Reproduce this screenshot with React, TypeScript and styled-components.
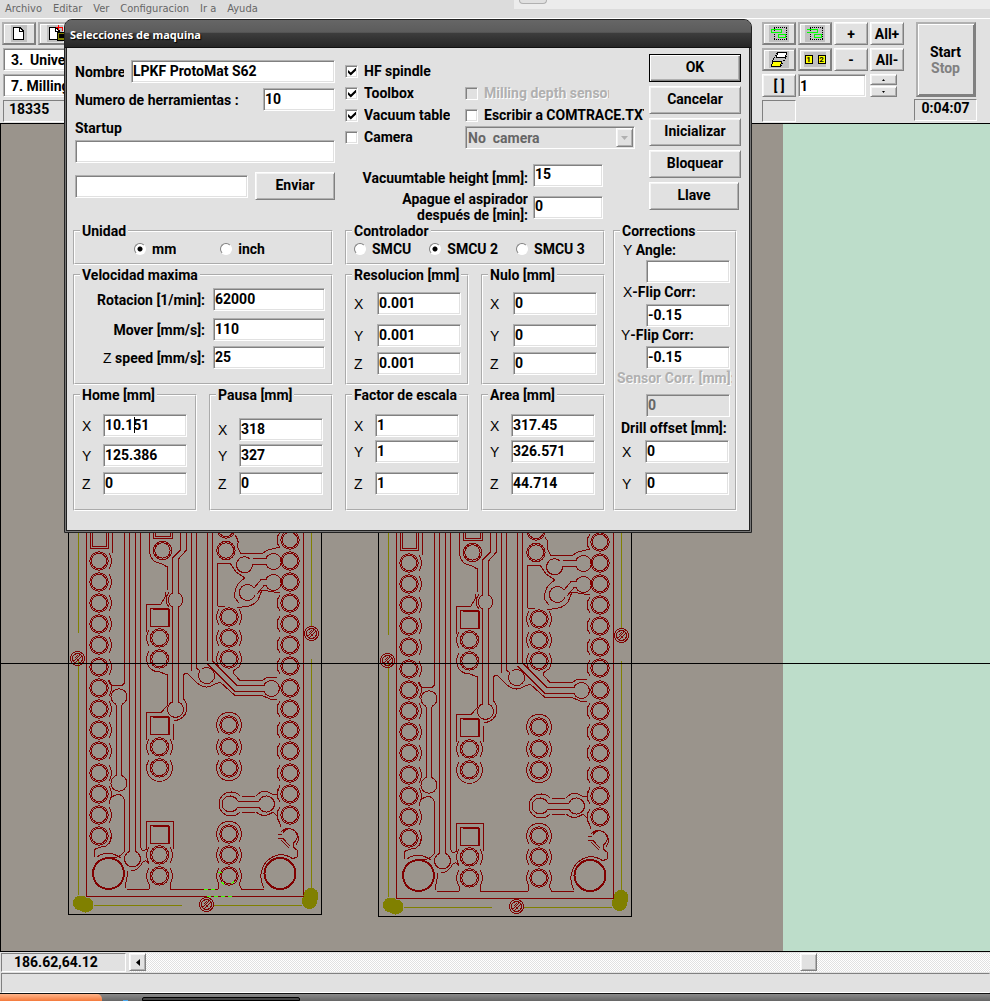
import React, { useId } from "react";
import styled, { createGlobalStyle, css } from "styled-components";

const face = "#e1e1e1";
const mid = "#b0b0b0";
const dark = "#808080";
const uiFont = `Roboto, "Liberation Sans", sans-serif`;

const GlobalStyle = createGlobalStyle`
  * { box-sizing: border-box; }
  body {
    margin: 0;
    background: ${face};
    color: #000;
    font: 700 14px/16px ${uiFont};
    overflow: hidden;
  }
  button, input, select { font: inherit; color: inherit; margin: 0; border-radius: 0; }
`;

const sunken = css`
  border: 1px solid;
  border-color: ${mid} #fff #fff ${mid};
  box-shadow: inset 1px 1px 0 ${dark}, inset -1px -1px 0 ${face};
`;

const raised = css`
  border: 1px solid;
  border-color: #fff ${dark} ${dark} #fff;
  box-shadow: inset 1px 1px 0 #f4f4f4, inset -1px -1px 0 ${mid};
`;

/* ---------- page frame ---------- */

const Page = styled.div`
  position: relative;
  min-height: 100vh;
  display: flex;
  flex-direction: column;
`;

const TopStrip = styled.header`
  display: flex;
  height: 19px;
  background: #dcdcdc;
  border-bottom: 1px solid #fff;
`;

const Menu = styled.nav`
  display: flex;
  flex: 0 0 514px;
  gap: 11px;
  padding-left: 5px;
  font: 400 11px/17px "DejaVu Sans Condensed", "DejaVu Sans", sans-serif;
`;

const MenuLink = styled.a`
  color: #666;
  text-decoration: none;
`;

const TabStrip = styled.div`
  flex: 1;
  height: 9px;
  padding-left: 5px;
  background: #ececec;
`;

const TabStub = styled.div`
  width: 28px;
  height: 4px;
  background: #e0e0e0;
  border: 1px solid ${mid};
  border-top: 0;
  border-radius: 0 0 4px 4px;
`;

const Toolbar = styled.div`
  display: flex;
  justify-content: space-between;
  height: 104px;
  padding: 3px 13px 0 2px;
`;

const ToolColumn = styled.div`
  display: flex;
  flex-direction: column;
  gap: 3px;
`;

const ButtonRow = styled.div`
  display: flex;
  gap: 2px;
`;

const toolFrame = css`
  border: 2px solid;
  border-color: ${mid} ${dark} ${dark} ${mid};
  box-shadow: inset 1px 1px 0 #fff;
`;

const ToolButton = styled.button<{ $icon?: boolean }>`
  display: flex;
  align-items: center;
  justify-content: center;
  width: 34px;
  height: 23px;
  padding: 0;
  background: ${face};
  white-space: pre;
  ${(p) => (p.$icon ? toolFrame : raised)}
`;

const PickList = styled.select`
  appearance: none;
  width: 160px;
  height: 23px;
  margin: 0 0 0 1px;
  padding: 0 7px;
  background: #fff;
  outline: 0;
  white-space: pre;
  ${sunken}
`;

const Readout = styled.output<{ $wide?: boolean }>`
  display: block;
  height: 22px;
  line-height: 17px;
  padding: 0 ${(p) => (p.$wide ? 6 : 5)}px;
  margin-left: ${(p) => (p.$wide ? 0 : 1)}px;
  border: 1px solid;
  border-color: ${dark} #fff #fff ${dark};
`;

const ToolRight = styled.div`
  display: flex;
  gap: 10px;
`;

const ToolGrid = styled.div`
  display: grid;
  grid-template-columns: repeat(4, 34px);
  grid-template-rows: 23px 23px 23px 22px;
  gap: 3px 2px;
`;

const StepField = styled.input`
  grid-column: span 2;
  width: 68px;
  height: 23px;
  padding: 0 1px;
  background: #fff;
  ${sunken}
`;

const Spinner = styled.div`
  display: flex;
  flex-direction: column;
  gap: 1px;
`;

const SpinButton = styled.button`
  display: flex;
  align-items: center;
  justify-content: center;
  width: 27px;
  height: 11px;
  padding: 0;
  background: ${face};
  ${raised}
`;

const StartColumn = styled.div`
  display: flex;
  flex-direction: column;
  align-items: center;
  gap: 2px;
  width: 63px;
`;

const StartButton = styled.button`
  width: 60px;
  height: 75px;
  padding: 0;
  background: ${face};
  border: 2px solid;
  border-color: ${mid} ${dark} ${dark} ${mid};
  box-shadow: inset 1px 1px 0 #fff, inset -1px -1px 0 ${dark};
`;

const Muted = styled.span`
  display: block;
  color: ${dark};
`;

const Workspace = styled.main`
  flex: 1;
  display: flex;
  min-height: 600px;
  border: solid #000;
  border-width: 1px 0 1px 1px;
  background: #bdddca;
`;

const Drawing = styled.svg`
  flex: 1;
  display: block;
  overflow: hidden;
`;

const ScrollRow = styled.div`
  display: flex;
  height: 21px;
  padding: 1px 0 1px 1px;
  gap: 3px;
`;

const Coordinates = styled.output`
  width: 125px;
  padding-left: 12px;
  line-height: 17px;
  border: 1px solid;
  border-color: ${dark} #fff #fff ${dark};
`;

const ScrollBar = styled.div`
  flex: 1;
  display: flex;
  background: conic-gradient(#fff 25%, ${face} 0 50%, #fff 0 75%, ${face} 0) 0 0 / 2px 2px;
`;

const ScrollButton = styled.button`
  display: flex;
  align-items: center;
  justify-content: center;
  width: 17px;
  height: 18px;
  padding: 0;
  background: ${face};
  ${raised}
`;

const Thumb = styled.div`
  width: 17px;
  height: 18px;
  margin-left: 76%;
  background: ${face};
  ${raised}
`;

const StatusBar = styled.footer`
  height: 20px;
  margin-left: 1px;
  border: 1px solid;
  border-color: ${dark} transparent #fff ${dark};
`;

const TaskBar = styled.div`
  display: flex;
  height: 8px;
  border-top: 1px solid #111;
  background: linear-gradient(#8a8a8a, #666);
  overflow: hidden;
`;

const StartOrb = styled.div`
  width: 102px;
  background: linear-gradient(#ffb48a, #f47a3c);
  border-radius: 0 5px 0 0;
`;

const TaskIcon = styled.div`
  width: 5px;
  height: 1px;
  margin: 6px 14px 0 21px;
  background: #4aa8ee;
`;

const TaskItem = styled.div`
  width: 158px;
  margin-top: 3px;
  border: 1px solid #000;
  border-radius: 2px 2px 0 0;
  background: #444;
`;

/* ---------- dialog ---------- */

const Dialog = styled.section`
  position: absolute;
  left: 64px;
  top: 19px;
  width: 688px;
  border: 1px solid #222;
  border-radius: 8px 8px 0 0;
  background: ${face};
  box-shadow: inset 0 0 0 1px #777, inset 0 0 0 2px #222;
  overflow: hidden;
`;

const TitleBar = styled.h1`
  margin: 0;
  height: 28px;
  padding: 0 5px;
  border-bottom: 1px solid #111;
  background: linear-gradient(#666 0, #5c5c5c 45%, #3c3c3c 50%, #262626 100%);
  color: #fff;
  text-shadow: 1px 1px 1px #000;
  font: 700 11px/29px "Noto Sans", sans-serif;
`;

const Upper = styled.div`
  display: grid;
  grid-template-columns: 260px 1fr 92px;
  padding: 6px 10px 0 10px;
`;

const Lower = styled.div`
  display: grid;
  grid-template-columns: 260px 260px 124px;
  column-gap: 12px;
  padding: 0 8px 21px;
  & > :last-child { margin-left: -4px; margin-right: 4px; }
`;

const Column = styled.div`
  display: flex;
  flex-direction: column;
`;

const Identity = styled(Column)`
  padding-top: 6px;
`;

const Line = styled.div<{ $gap?: number; $align?: string }>`
  display: flex;
  align-items: center;
  justify-content: ${(p) => p.$align ?? "space-between"};
  margin-top: ${(p) => p.$gap ?? 0}px;
`;

const Label = styled.label<{ $clip?: number; $off?: boolean }>`
  white-space: nowrap;
  overflow: hidden;
  ${(p) => p.$clip && `width: ${p.$clip}px;`}
  ${(p) => p.$off && `color: ${mid}; text-shadow: 1px 1px 0 #fff;`}
`;

const StartupLabel = styled(Label)`
  padding: 9px 0 4px;
`;

const Thin = styled.span`
  font: 400 14px/16px "Liberation Sans", sans-serif;
`;

const Field = styled.input<{ $w?: number }>`
  width: ${(p) => (p.$w ? `${p.$w}px` : "100%")};
  height: 23px;
  padding: 0 1px 2px;
  background: #fff;
  outline: 0;
  ${sunken}
  &:disabled { background: ${face}; color: #666; }
`;

const PushButton = styled.button<{ $primary?: boolean; $w?: number }>`
  width: ${(p) => p.$w ?? 92}px;
  height: 28px;
  padding: 0 0 2px;
  background: ${face};
  ${raised}
  ${(p) =>
    p.$primary &&
    `border-color: #000; box-shadow: inset 1px 1px 0 #fff, inset -1px -1px 0 ${dark}, inset -2px -2px 0 ${mid};`}
`;

const Actions = styled(Column)`
  gap: 4px;
`;

const Options = styled.div`
  display: grid;
  grid-template-columns: 120px 180px;
  grid-auto-rows: 22px;
  padding: 6px 0 0 10px;
`;

const Choice = styled.div`
  display: flex;
  align-items: center;
  gap: 6px;
`;

const CheckBox = styled.input`
  appearance: none;
  flex: none;
  width: 13px;
  height: 13px;
  background: #fff;
  ${sunken}
  &:disabled { background: ${face}; }
  &:checked::after {
    content: "";
    display: block;
    width: 8px;
    height: 8px;
    margin: 2px;
    background: #000;
    clip-path: polygon(0 30%, 35% 62%, 100% 0, 100% 36%, 35% 100%, 0 66%);
  }
`;

const RadioDot = styled.input`
  appearance: none;
  flex: none;
  width: 12px;
  height: 12px;
  border: 1px solid;
  border-color: ${dark} #fff #fff ${dark};
  border-radius: 50%;
  background: #fff;
  &:checked { background: radial-gradient(circle, #000 2px, #fff 3px); }
`;

const SelectBox = styled.div`
  position: relative;
  width: 170px;
  height: 23px;
`;

const CameraSelect = styled.select`
  appearance: none;
  width: 100%;
  height: 23px;
  padding: 0 2px;
  background: ${face};
  ${sunken}
  &:disabled { opacity: 1; color: #666; }
`;

const DropArrow = styled.span`
  position: absolute;
  top: 2px;
  right: 2px;
  display: flex;
  align-items: center;
  justify-content: center;
  width: 17px;
  height: 19px;
  pointer-events: none;
  background: ${face};
  ${raised}
`;

const Vacuum = styled.div`
  display: grid;
  grid-template-columns: 193px 70px;
  grid-auto-rows: 32px;
  column-gap: 5px;
  align-items: center;
  text-align: right;
  & > label:first-child { padding-top: 6px; }
`;

const Group = styled.fieldset<{ $h?: number }>`
  min-width: 0;
  margin: 0;
  padding: 0;
  height: ${(p) => (p.$h ? `${p.$h}px` : "auto")};
  border: 2px groove #fff;
`;

const Legend = styled.legend`
  margin-left: 5px;
  padding: 0 2px;
  white-space: nowrap;
`;

const Pair = styled.div`
  display: grid;
  grid-template-columns: 1fr 1fr;
  column-gap: 12px;
`;

const Stack = styled(Column)`
  gap: 2px;
`;

const RadioRow = styled.div<{ $left: number; $gap: number }>`
  display: flex;
  gap: ${(p) => p.$gap}px;
  padding: 2px 0 0 ${(p) => p.$left}px;
`;

const AxisLine = styled.div<{ $gap: number; $right: number }>`
  display: flex;
  align-items: center;
  justify-content: space-between;
  margin-top: ${(p) => p.$gap}px;
  padding: 0 ${(p) => p.$right}px 0 7px;
`;

const SpeedLine = styled.div<{ $gap: number }>`
  display: grid;
  grid-template-columns: 130px 112px;
  column-gap: 8px;
  align-items: center;
  margin-top: ${(p) => p.$gap}px;
  text-align: right;
`;

const CorrLabel = styled(Label)<{ $gap: number }>`
  display: block;
  margin: ${(p) => p.$gap}px 0 0 8px;
`;

const TightLabel = styled(CorrLabel)`
  margin-left: 6px;
`;

const SensorLabel = styled(CorrLabel)`
  margin-left: 2px;
`;

const CorrRow = styled.div<{ $gap: number }>`
  display: flex;
  justify-content: flex-end;
  margin-top: ${(p) => p.$gap}px;
  padding-right: 5px;
`;

const CaretHost = styled.span`
  position: relative;
  display: flex;
`;

const Caret = styled.span`
  position: absolute;
  left: 31px;
  top: 3px;
  width: 1px;
  height: 16px;
  background: #000;
`;

/* ---------- pieces ---------- */

function Check({ label, on, off, clip }: { label: string; on?: boolean; off?: boolean; clip?: number }) {
  const id = useId();
  return (
    <Choice>
      <CheckBox type="checkbox" id={id} defaultChecked={on} disabled={off} />
      <Label htmlFor={id} $off={off} $clip={clip}>{label}</Label>
    </Choice>
  );
}

function Radio({ name, label, on }: { name: string; label: string; on?: boolean }) {
  const id = useId();
  return (
    <Choice>
      <RadioDot type="radio" name={name} id={id} defaultChecked={on} />
      <Label htmlFor={id}>{label}</Label>
    </Choice>
  );
}

function AxisField({ axis, value, gap, right, caret }: { axis: string; value: string; gap: number; right: number; caret?: boolean }) {
  const id = useId();
  return (
    <AxisLine $gap={gap} $right={right}>
      <label htmlFor={id}><Thin>{axis}</Thin></label>
      <CaretHost>
        <Field id={id} $w={84} defaultValue={value} />
        {caret && <Caret />}
      </CaretHost>
    </AxisLine>
  );
}

function AxisGroup({ title, values, gaps, right = 8, h, caret }: { title: string; values: string[]; gaps: number[]; right?: number; h: number; caret?: boolean }) {
  return (
    <Group $h={h}>
      <Legend>{title}</Legend>
      {values.map((v, i) => (
        <AxisField key={i} axis={"XYZ"[i]} value={v} gap={gaps[i]} right={right} caret={caret && i === 0} />
      ))}
    </Group>
  );
}

function Speed({ label, value, gap }: { label: React.ReactNode; value: string; gap: number }) {
  const id = useId();
  return (
    <SpeedLine $gap={gap}>
      <Label htmlFor={id}>{label}</Label>
      <Field id={id} defaultValue={value} />
    </SpeedLine>
  );
}

/* ---------- board artwork ---------- */

const leftPads = [561, 582, 603, 624, 645, 667, 688, 709, 730, 751, 773, 794, 815, 836];
const rightPads = [540, 561, 582, 603, 624, 645, 666, 688, 709, 730, 751, 773, 794, 815];
const midPads = [617, 638, 659, 725, 747, 768, 834, 855, 876];
const innerPads = [638, 659, 747, 768, 855, 876];

function Pad({ x, y }: { x: number; y: number }) {
  return (
    <>
      <circle cx={x} cy={y} r="9.2" />
      <circle cx={x} cy={y} r="7.7" />
    </>
  );
}

function Screw({ x, y }: { x: number; y: number }) {
  return (
    <g>
      <circle cx={x} cy={y} r="7" />
      <circle cx={x} cy={y} r="5" />
      <path d={`M${x - 4} ${y + 3}L${x + 3} ${y - 4}M${x - 2} ${y + 4}L${x + 4} ${y - 2}M${x - 3} ${y}L${x} ${y - 3}M${x} ${y + 1}l2 2`} />
    </g>
  );
}

function Board() {
  return (
    <g fill="none" stroke="#800000">
      <path d="M68.500 500V914.500H321.500V500" stroke="#000" />
      <path d="M78.500 500V633M78.500 659V895M311.500 500V627M311.500 659V895M94 905.500H182M213 905.500H302" stroke="#808000" />
      <path d="M86.500 500V896.500H303.500V500" />

      {leftPads.map((y) => (
        <g key={y}>
          <Pad x={99} y={y} />
          <path d={`M109 ${y - 8}Q114 ${y} 109 ${y + 8}`} />
        </g>
      ))}
      {rightPads.map((y) => (
        <g key={y}>
          <Pad x={290} y={y} />
          {![561, 582, 688].includes(y) && <path d={`M280 ${y - 8}Q274 ${y} 280 ${y + 8}`} />}
        </g>
      ))}
      {midPads.map((y) => (
        <g key={y}>
          <Pad x={229} y={y} />
          <path d={`M219 ${y - 8}Q214 ${y} 219 ${y + 8}M239 ${y - 8}Q244 ${y} 239 ${y + 8}`} />
        </g>
      ))}
      {innerPads.map((y) => (
        <g key={y}>
          <Pad x={159.5} y={y} />
          <path d={`M149 ${y - 8}Q144 ${y} 149 ${y + 8}`} />
          {y > 700 && <path d={`M170 ${y - 8}Q175 ${y} 170 ${y + 8}`} />}
        </g>
      ))}
      <path d="M219 717A13 13 0 0 1 239 717M219 776A13 13 0 0 0 239 776M219 826A13 13 0 0 1 239 826M149 776A13 13 0 0 0 170 776M149 667Q153 672 160 672L167.500 675V702M239 667Q233 670 233 673L240 680.500" />

      {[608, 716, 825].map((y) => (
        <g key={y}>
          <rect x="150.500" y={y + 0.5} width="18" height="18" />
          <path d={`M152.500 ${y + 1.5}H169.500V${y + 19}`} />
          <path d={`M146.500 ${y + 24}V${y - 3.5}H161`} />
        </g>
      ))}
      <path d="M161 604L165 597V592M161 712.500L167 706V700M161 821.500H173.500V849M173.500 724V740M174 721Q186 719 187 708Q186 700 183.500 699V675L187 673" />

      <path d="M90.500 500V548.500H108.500V500M92.500 500V546.500H106.500V500M112.500 500V553" />
      <path d="M124.500 500V683L122 685.500H114M109 680Q108 685 114 685.500M129.500 500V852M135.500 500V852M140.500 500V848" />
      <path d="M124.500 852V800Q123 794.500 118 794.500Q110 795 109 804M124 852Q119 858 112 858M94 857V850Q98 847 106 846Q111 842 111 837" />
      <path d="M116.500 705V776M121.500 705V776M116.500 704.500A8 8 0 1 1 121.500 704.500M116.500 775.500A8 8 0 1 0 121.500 775.500" />
      <path d="M129.500 851.500A8 8 0 1 0 135.500 851.500M131 871Q139 870 142 863Q146 858 149 864M141 848Q142 853 146.500 849V822" />

      <path d="M153.500 500V538.500H172.500V500M155.500 500V536.500H170.500V500M149.500 500V548Q149 562 161 563.500L167.500 567V590" />
      <Pad x={162.5} y={550.5} />
      <path d="M180.500 500V550L172.500 558V593M186.500 500V550L178.500 559V593M172.500 593A8 8 0 0 0 172.500 607V702M178.500 593A8 8 0 0 1 178.500 607V702M172.500 702A8 8 0 1 0 178.500 702M169 592Q163 600 169 607" />

      <path d="M191.500 500V671M196.500 500V668M207.500 500V661M212.500 500V661M184 673H187L197 683Q206 690 213 685L220 682L235 695.500H262L270 699H277" />
      <path d="M196.500 668L200 671A8 8 0 1 0 202 669M207.500 664L235 691.500H264M212.500 661L237 685.500H264M240 680.500H262L268 677H277M264 685.500A8 8 0 1 1 264 691.500" />

      <Pad x={226} y={550.5} />
      <Pad x={226} y={529} />
      <path d="M235 535Q240 542 237 546L241 553.500H262L268 550L280 547M217.500 606V563H230L236 572L245 578Q233 585 235 598L239 603M217.500 606H225M237 607Q252 608 258 600L262 590L280 593" />
      <path d="M252.500 558.500H266M252.500 564.500H266M252.500 564.500A8 8 0 1 1 250 559M266 558.500A8 8 0 1 1 266 564.500" />
      <path d="M254 588L261 579.500H266M257 594L264 585.500H266M254 588A8 8 0 1 0 255 595M266 579.500A8 8 0 1 1 266 585.500" />

      <path d="M237.500 801.500H259M237.500 807.500H259M237.500 801A8 8 0 1 0 237.500 807M259 801A8 8 0 1 1 259 807" />
      <path d="M240 796A12 12 0 1 0 240 812M242 796.500H255M242 812.500H255M256 796Q264 787 273 795L277 794L280 785M256 812Q264 819 273 812L277 816L281 827" />
      <path d="M281 832A9 9 0 1 1 296 845M283 833A7.500 7.500 0 1 1 293 843M278 834.500H282M278 838.500H283L290 846M281 840L289 848M293 843V847L297 850V857L292 859" />

      <circle cx="108.500" cy="873.500" r="16" />
      <circle cx="108.500" cy="873.500" r="15" />
      <path d="M97 857Q108 849 121 858M128 871L125 888" />
      <circle cx="280" cy="873.500" r="16" />
      <circle cx="280" cy="873.500" r="15" />
      <path d="M264 888Q257 874 266 862Q279 849 293 859" />
      <path d="M127 889.500H149L150 884M170 884V889.500H218L219 884M239 884L242 889.500H264" />

      <Screw x={77.5} y={658.5} />
      <Screw x={311.5} y={633.5} />
      <Screw x={206.5} y={904.5} />
      <path d="M80.500 903H81M85.500 905H86M311 895.500V896M309.500 901V901.500" stroke="#808000" strokeWidth="15" strokeLinecap="round" />
    </g>
  );
}

function PlotArea() {
  return (
    <Drawing role="img" aria-label="PCB layout" shapeRendering="crispEdges">
      <rect width="79.100%" height="100%" fill="#9a948c" />
      <g transform="translate(-1 -124)">
        <Board />
        <g transform="translate(310 2)"><Board /></g>
        <path d="M204 889.500H216M207 896.500H232M218 872.500H224M221 882L225 885M231 884L235 881" fill="none" stroke="#40ff00" strokeDasharray="4 3" />
        <path d="M0 663.500H4000" stroke="#000" />
      </g>
    </Drawing>
  );
}

/* ---------- toolbar icons ---------- */

const PageIcon = ({ save }: { save?: boolean }) => (
  <svg width="24" height="19" viewBox="0 0 24 19" shapeRendering="crispEdges">
    <rect x="4" y="1" width="16" height="17" fill="#c0c0c0" />
    <path d="M6.500 3.500H13L16.500 7V15.500H6.500Z" fill="#fff" stroke="#000" />
    <path d="M12.500 3.500V7.500H16.500" fill="none" stroke="#000" />
    {save && (
      <>
        <path d="M13 3.500H19.500V7M15.500 1V6" fill="none" stroke="#f00" strokeWidth="1.500" />
        <rect x="14.500" y="8.500" width="8" height="8" fill="#808000" stroke="#000" />
        <path d="M16 13H21M16 10.500H21" stroke="#000" strokeWidth="2" />
      </>
    )}
  </svg>
);

const LayersIcon = ({ shifted }: { shifted?: boolean }) => (
  <svg width="24" height="17" viewBox="0 0 24 17" shapeRendering="crispEdges">
    <rect x="2" width="20" height="17" fill="#c0c0c0" />
    <path d="M7 2.500H20M7 14.500H20" stroke="#000" strokeDasharray="1 1" />
    <path d="M7.500 3V15M19.500 3V15" stroke="#000" strokeDasharray="1 1" />
    <path d={shifted ? "M4 4.500H14.500V7.500H4M11.500 9.500H18.500V12.500H11.500Z" : "M4.500 4.500H14.500V7.500H4.500ZM11.500 9.500H18.500V12.500H11.500Z"} fill="none" stroke="#0f0" />
  </svg>
);

const FlipIcon = () => (
  <svg width="24" height="17" viewBox="0 0 24 17" shapeRendering="crispEdges">
    <rect x="2" width="20" height="17" fill="#c0c0c0" />
    <path d="M5 10L10 2M14 15L20 4" stroke="#000" strokeDasharray="1 1" />
    <path d="M10.500 1.500H19.500L18.500 6.500H9.500Z" fill="#fff" stroke="#000" />
    <path d="M5.500 10.500H14.500L13.500 15.500H4.500Z" fill="#ff0" stroke="#000" />
  </svg>
);

const NumberBadge = styled.span`
  width: 6px;
  height: 7px;
  background: #ff0;
  outline: 1px solid #000;
  font: 700 8px/8px ${uiFont};
  text-align: center;
`;

const NumberPlate = styled.span`
  display: flex;
  align-items: center;
  justify-content: center;
  gap: 7px;
  width: 22px;
  height: 15px;
  background: #c0c0c0;
`;

const Triangle = ({ d, color = "#000", w = 7, h = 4 }: { d: string; color?: string; w?: number; h?: number }) => (
  <svg width={w} height={h} viewBox={`0 0 ${w} ${h}`}><path d={d} fill={color} /></svg>
);

/* ---------- app ---------- */

export default function App() {
  return (
    <Page>
      <GlobalStyle />
      <TopStrip>
        <Menu>
          {["Archivo", "Editar", "Ver", "Configuracion", "Ir a", "Ayuda"].map((m) => (
            <MenuLink key={m} href="#">{m}</MenuLink>
          ))}
        </Menu>
        <TabStrip><TabStub /></TabStrip>
      </TopStrip>

      <Toolbar>
        <ToolColumn>
          <ButtonRow>
            <ToolButton $icon aria-label="Nuevo"><PageIcon /></ToolButton>
            <ToolButton $icon aria-label="Guardar"><PageIcon save /></ToolButton>
          </ButtonRow>
          <PickList aria-label="Herramienta"><option>{"3.\u00a0 Universal"}</option></PickList>
          <PickList aria-label="Fase"><option>7. Milling</option></PickList>
          <Readout>18335</Readout>
        </ToolColumn>
        <ToolRight>
          <ToolGrid>
            <ToolButton $icon aria-label="Capas"><LayersIcon /></ToolButton>
            <ToolButton $icon aria-label="Mover capas"><LayersIcon shifted /></ToolButton>
            <ToolButton>+</ToolButton>
            <ToolButton>All+</ToolButton>
            <ToolButton $icon aria-label="Girar"><FlipIcon /></ToolButton>
            <ToolButton $icon>
              <NumberPlate><NumberBadge>1</NumberBadge><NumberBadge>2</NumberBadge></NumberPlate>
            </ToolButton>
            <ToolButton>-</ToolButton>
            <ToolButton>All-</ToolButton>
            <ToolButton>[ ]</ToolButton>
            <StepField aria-label="Paso" defaultValue="1" />
            <Spinner>
              <SpinButton aria-label="Subir"><Triangle w={3} h={2} d="M0 2L1.500 0L3 2Z" /></SpinButton>
              <SpinButton aria-label="Bajar"><Triangle w={3} h={2} d="M0 0L1.500 2L3 0Z" /></SpinButton>
            </Spinner>
            <Readout $wide />
          </ToolGrid>
          <StartColumn>
            <StartButton>Start<Muted>Stop</Muted></StartButton>
            <Readout $wide>0:04:07</Readout>
          </StartColumn>
        </ToolRight>
      </Toolbar>

      <Workspace><PlotArea /></Workspace>

      <ScrollRow>
        <Coordinates>186.62,64.12</Coordinates>
        <ScrollBar>
          <ScrollButton aria-label="Izquierda"><Triangle w={4} h={7} d="M4 0V7L0 3.500Z" /></ScrollButton>
          <Thumb />
        </ScrollBar>
      </ScrollRow>
      <StatusBar />
      <TaskBar><StartOrb /><TaskIcon /><TaskItem /></TaskBar>

      <Dialog role="dialog" aria-labelledby="dialog-title">
        <TitleBar id="dialog-title">Selecciones de maquina</TitleBar>
        <Upper>
          <Identity>
            <Line>
              <Label htmlFor="nombre" $clip={49}>Nombre</Label>
              <Field id="nombre" $w={204} defaultValue="LPKF ProtoMat S62" />
            </Line>
            <Line $gap={5}>
              <Label htmlFor="numero">Numero de herramientas :</Label>
              <Field id="numero" $w={72} defaultValue="10" />
            </Line>
            <StartupLabel htmlFor="startup">Startup</StartupLabel>
            <Field id="startup" />
            <Line $gap={9}>
              <Field aria-label="Comando" $w={173} />
              <PushButton $w={80}>Enviar</PushButton>
            </Line>
          </Identity>

          <Column>
            <Options>
              <Check label="HF spindle" on />
              <span />
              <Check label="Toolbox" on />
              <Check label="Milling depth sensor" off clip={125} />
              <Check label="Vacuum table" on />
              <Check label="Escribir a COMTRACE.TXT" clip={160} />
              <Check label="Camera" />
              <SelectBox>
                <CameraSelect aria-label="Camera" disabled><option>{"No\u00a0 camera"}</option></CameraSelect>
                <DropArrow><Triangle d="M0 0H7L3.500 4Z" color={mid} /></DropArrow>
              </SelectBox>
            </Options>
            <Line $gap={11} $align="flex-start">
              <Vacuum>
                <Label htmlFor="vac-height">Vacuumtable height [mm]:</Label>
                <Field id="vac-height" defaultValue="15" />
                <Label htmlFor="vac-off">Apague el aspirador<br />después de [min]:</Label>
                <Field id="vac-off" defaultValue="0" />
              </Vacuum>
            </Line>
          </Column>

          <Actions>
            <PushButton $primary>OK</PushButton>
            <PushButton>Cancelar</PushButton>
            <PushButton>Inicializar</PushButton>
            <PushButton>Bloquear</PushButton>
            <PushButton $w={90}>Llave</PushButton>
          </Actions>
        </Upper>

        <Lower>
          <Stack>
            <Group $h={42}>
              <Legend>Unidad</Legend>
              <RadioRow $left={59} $gap={44}>
                <Radio name="unit" label="mm" on />
                <Radio name="unit" label="inch" />
              </RadioRow>
            </Group>
            <Group $h={118}>
              <Legend>Velocidad maxima</Legend>
              <Speed label="Rotacion [1/min]:" value="62000" gap={5} />
              <Speed label="Mover [mm/s]:" value="110" gap={7} />
              <Speed label={<><Thin>Z</Thin> speed [mm/s]:</>} value="25" gap={5} />
            </Group>
            <Pair>
              <AxisGroup title="Home [mm]" values={["10.151", "125.386", "0"]} gaps={[11, 7, 5]} h={124} caret />
              <AxisGroup title="Pausa [mm]" values={["318", "327", "0"]} gaps={[15, 3, 5]} h={124} />
            </Pair>
          </Stack>

          <Stack>
            <Group $h={42}>
              <Legend>Controlador</Legend>
              <RadioRow $left={7} $gap={18}>
                <Radio name="controller" label="SMCU" />
                <Radio name="controller" label="SMCU 2" on />
                <Radio name="controller" label="SMCU 3" />
              </RadioRow>
            </Group>
            <Pair>
              <AxisGroup title="Resolucion [mm]" values={["0.001", "0.001", "0.001"]} gaps={[9, 9, 5]} right={6} h={118} />
              <AxisGroup title="Nulo [mm]" values={["0", "0", "0"]} gaps={[9, 9, 5]} right={6} h={118} />
            </Pair>
            <Pair>
              <AxisGroup title="Factor de escala" values={["1", "1", "1"]} gaps={[11, 3, 9]} h={124} />
              <AxisGroup title="Area [mm]" values={["317.45", "326.571", "44.714"]} gaps={[11, 3, 9]} h={124} />
            </Pair>
          </Stack>

          <Group>
            <Legend>Corrections</Legend>
            <CorrLabel $gap={3} htmlFor="y-angle"><Thin>Y</Thin> Angle:</CorrLabel>
            <CorrRow $gap={2}><Field id="y-angle" $w={84} /></CorrRow>
            <CorrLabel $gap={1} htmlFor="x-flip"><Thin>X</Thin>-Flip Corr:</CorrLabel>
            <CorrRow $gap={4}><Field id="x-flip" $w={84} defaultValue="-0.15" /></CorrRow>
            <TightLabel $gap={0} htmlFor="y-flip"><Thin>Y</Thin>-Flip Corr:</TightLabel>
            <CorrRow $gap={3}><Field id="y-flip" $w={84} defaultValue="-0.15" /></CorrRow>
            <SensorLabel $gap={1} $off $clip={115} htmlFor="sensor">Sensor Corr. [mm]:</SensorLabel>
            <CorrRow $gap={8}><Field id="sensor" $w={84} defaultValue="0" disabled /></CorrRow>
            <TightLabel as="div" $gap={3}>Drill offset [mm]:</TightLabel>
            <AxisField axis="X" value="0" gap={4} right={6} />
            <AxisField axis="Y" value="0" gap={9} right={6} />
          </Group>
        </Lower>
      </Dialog>
    </Page>
  );
}
